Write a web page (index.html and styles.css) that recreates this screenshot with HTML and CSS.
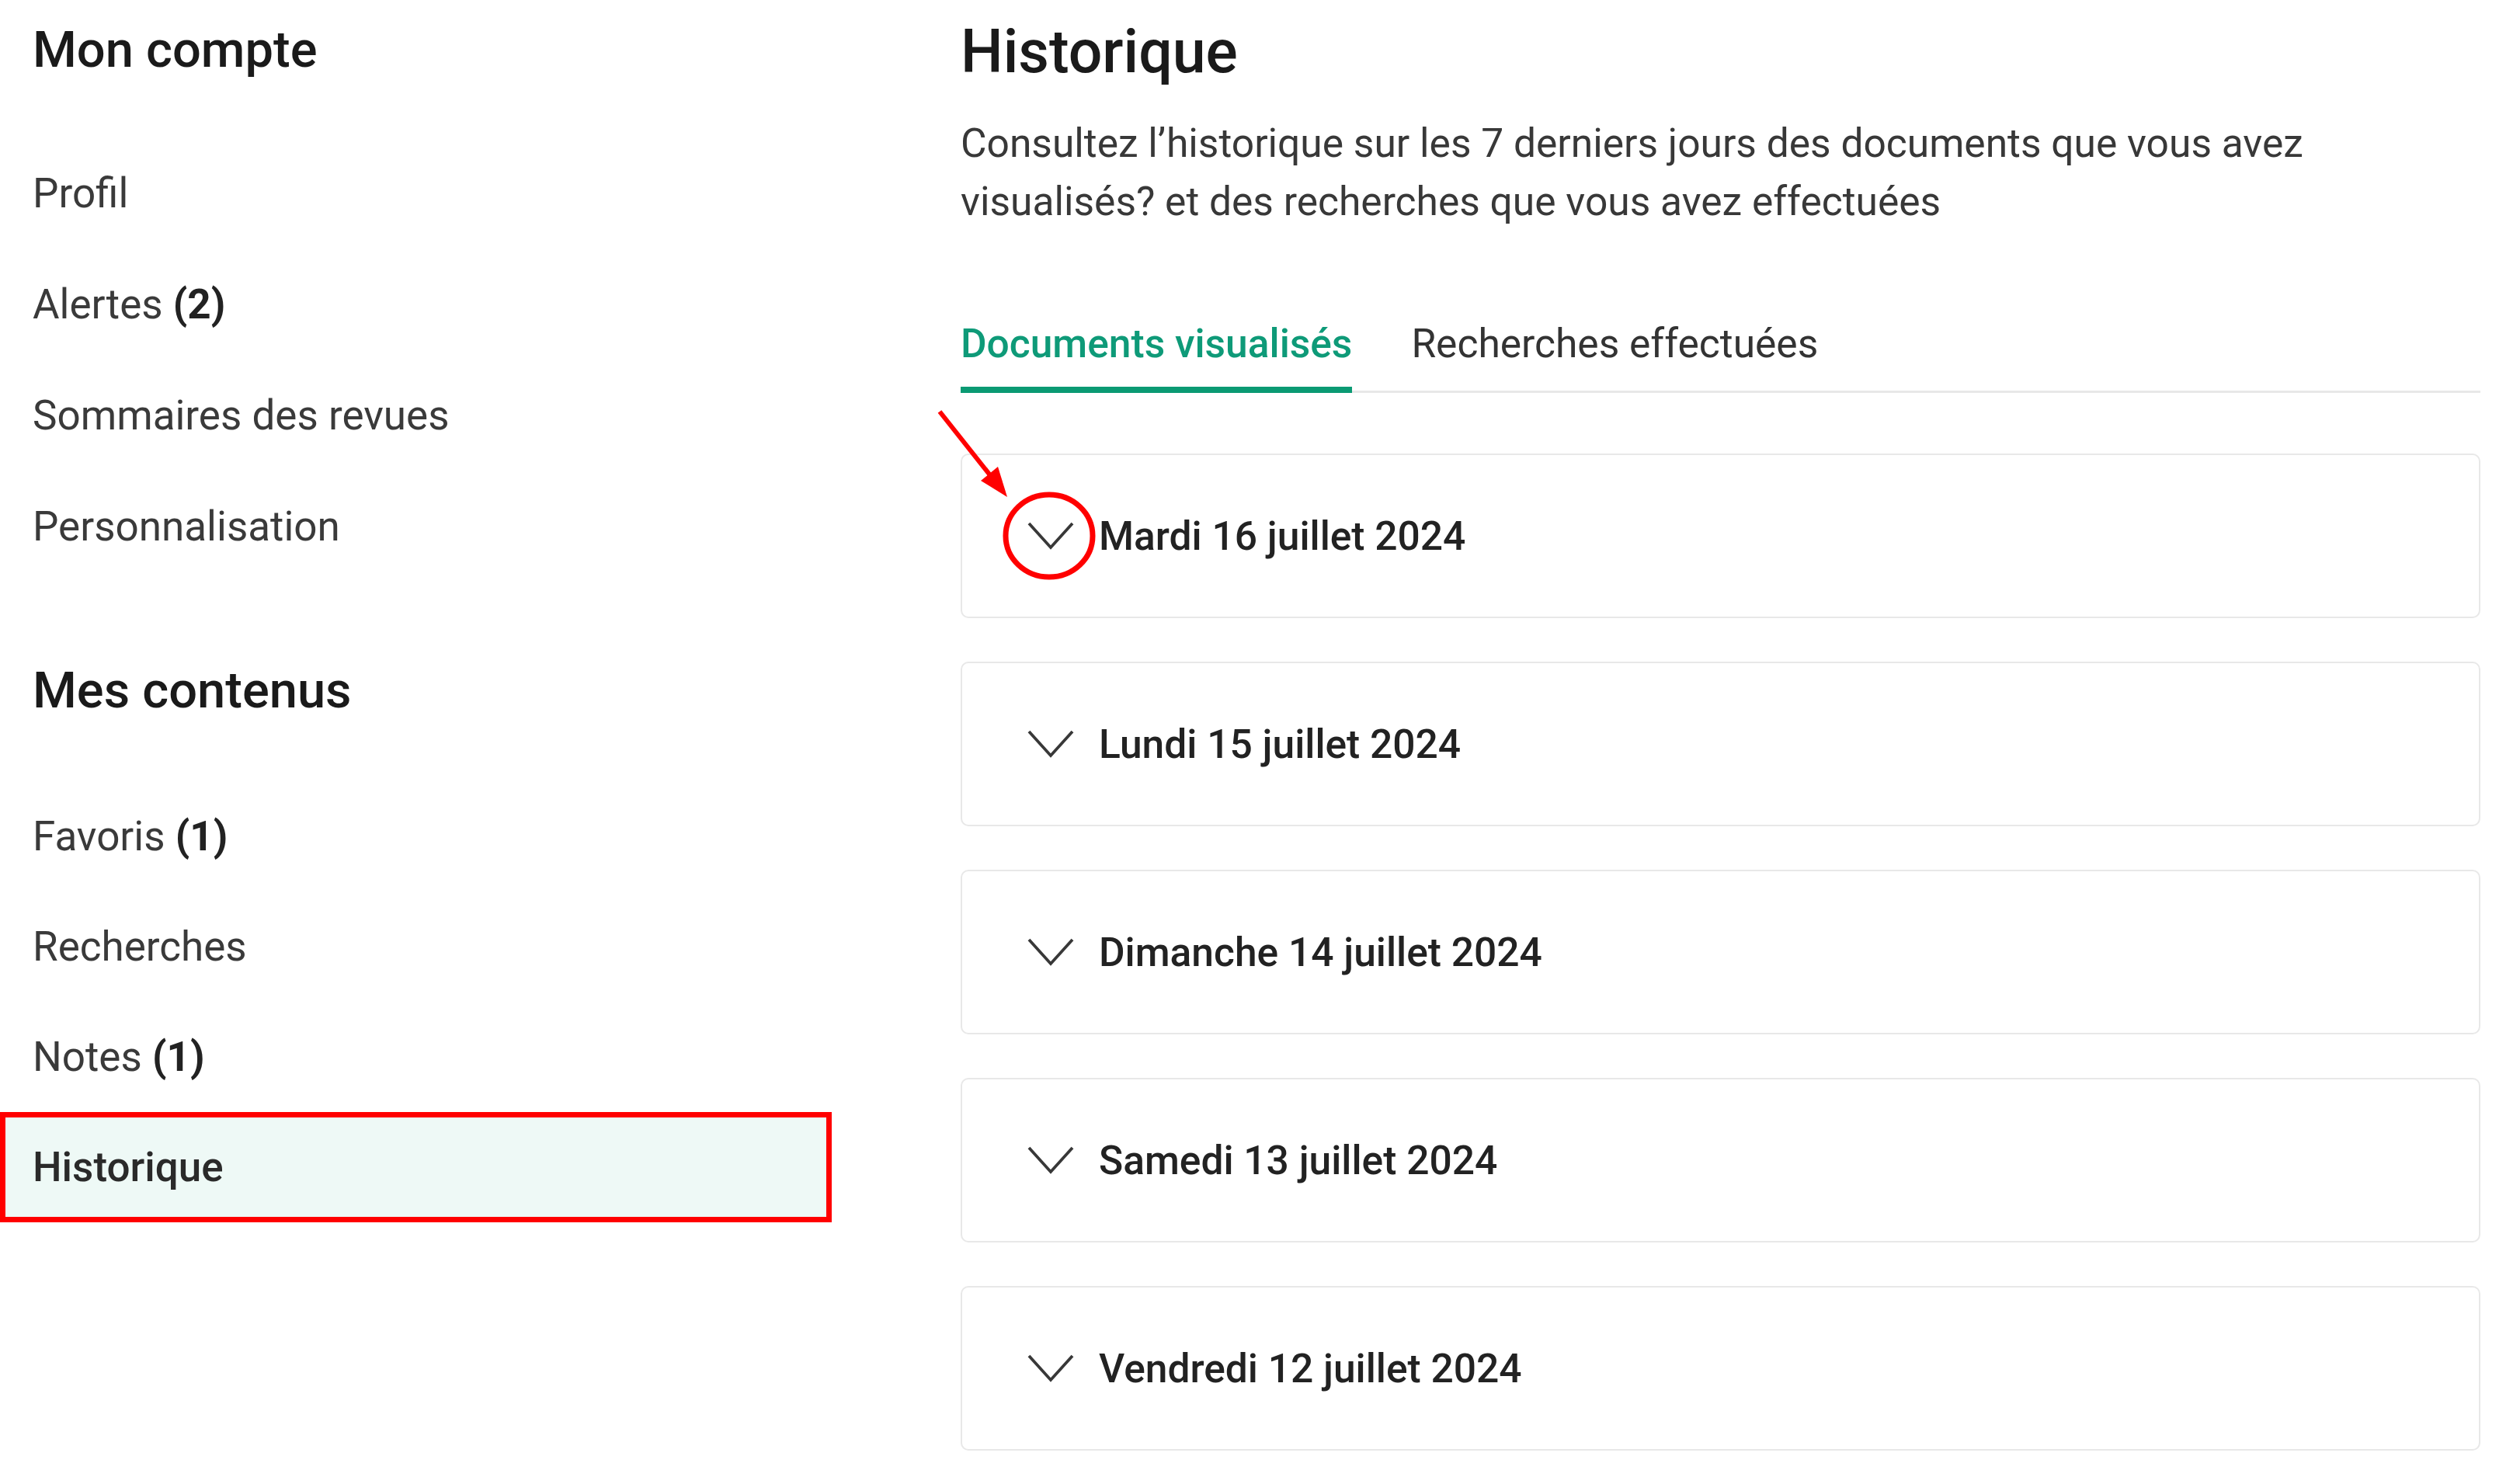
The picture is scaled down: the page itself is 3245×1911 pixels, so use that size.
FILE: index.html
```html
<!DOCTYPE html>
<html lang="fr">
<head>
<meta charset="utf-8">
<title>Historique</title>
<link rel="stylesheet" href="styles.css">
</head>
<body>
<div class="page">
  <aside class="sidebar">
    <h2 class="side-title first">Mon compte</h2>
    <nav class="side-nav">
      <a class="side-item">Profil</a>
      <a class="side-item">Alertes <b>(2)</b></a>
      <a class="side-item">Sommaires des revues</a>
      <a class="side-item">Personnalisation</a>
    </nav>
    <h2 class="side-title second">Mes contenus</h2>
    <nav class="side-nav compact">
      <a class="side-item">Favoris <b>(1)</b></a>
      <a class="side-item">Recherches</a>
      <a class="side-item">Notes <b>(1)</b></a>
      <a class="side-item active">Historique</a>
    </nav>
  </aside>
  <main class="content">
    <h1 class="title">Historique</h1>
    <p class="desc">Consultez l’historique sur les 7 derniers jours des documents que vous avez visualisés? et des recherches que vous avez effectuées</p>
    <div class="tabs">
      <div class="tab active">Documents visualisés</div>
      <div class="tab">Recherches effectuées</div>
    </div>
    <div class="days">
      <div class="day">
        <svg class="chev" viewBox="0 0 60 36"><path d="M2 2 L30 33 L58 2"/></svg>
        <span class="day-label">Mardi 16 juillet 2024</span>
      </div>
      <div class="day">
        <svg class="chev" viewBox="0 0 60 36"><path d="M2 2 L30 33 L58 2"/></svg>
        <span class="day-label">Lundi 15 juillet 2024</span>
      </div>
      <div class="day">
        <svg class="chev" viewBox="0 0 60 36"><path d="M2 2 L30 33 L58 2"/></svg>
        <span class="day-label">Dimanche 14 juillet 2024</span>
      </div>
      <div class="day">
        <svg class="chev" viewBox="0 0 60 36"><path d="M2 2 L30 33 L58 2"/></svg>
        <span class="day-label">Samedi 13 juillet 2024</span>
      </div>
      <div class="day">
        <svg class="chev" viewBox="0 0 60 36"><path d="M2 2 L30 33 L58 2"/></svg>
        <span class="day-label">Vendredi 12 juillet 2024</span>
      </div>
    </div>
  </main>
  <svg class="annot" viewBox="0 0 3245 1911" width="3245" height="1911">
    <ellipse cx="1351" cy="690" rx="56" ry="53" fill="none" stroke="#ff0000" stroke-width="7"/>
    <line x1="1210" y1="530" x2="1275" y2="612" stroke="#ff0000" stroke-width="6"/>
    <polygon points="1297,640 1263,619 1285,601" fill="#ff0000"/>
  </svg>
</div>
</body>
</html>
```

FILE: styles.css
```css
* { box-sizing: border-box; }
html, body {
  margin: 0;
  padding: 0;
  background: #ffffff;
}
body {
  font-family: Roboto, "Liberation Sans", Arial, sans-serif;
  color: #333333;
}
.page {
  position: relative;
  display: flex;
  width: 3245px;
  min-height: 1911px;
}
.sidebar {
  width: 1071px;
  flex: none;
}
.side-title {
  margin: 0;
  padding-left: 42px;
  font-size: 65px;
  font-weight: 500;
  line-height: 78px;
  color: #1a1a1a;
}
.side-title.first { margin-top: 25px; margin-bottom: 75px; }
.side-title.second { margin-top: 100px; margin-bottom: 78px; }
.side-nav {
  display: flex;
  flex-direction: column;
}
.side-item {
  display: block;
  height: 143px;
  line-height: 143px;
  padding-left: 42px;
  font-size: 53px;
  color: #3a3a3a;
  text-decoration: none;
}
.side-nav.compact .side-item {
  height: 142px;
  line-height: 142px;
}
.side-item b {
  font-weight: 700;
  color: #222222;
}
.side-nav .side-item.active {
  background: #eef9f6;
  border: 7px solid #ff0000;
  line-height: 128px;
  padding-left: 35px;
  color: #2a2a2a;
  font-weight: 500;
}
.content {
  margin-left: 166px;
  width: 1957px;
  flex: none;
}
.title {
  margin: 20px 0 0 0;
  font-size: 77px;
  font-weight: 500;
  line-height: 94px;
  color: #1a1a1a;
}
.desc {
  margin: 33px 0 0 0;
  font-size: 51.5px;
  line-height: 75px;
  color: #383838;
}
.tabs {
  display: flex;
  gap: 76px;
  margin-top: 115px;
  border-bottom: 3px solid #e8e8e8;
}
.tab {
  font-size: 51.5px;
  line-height: 61px;
  padding-bottom: 25px;
  color: #333333;
  margin-bottom: -3px;
  border-bottom: 8px solid transparent;
}
.tab.active {
  color: #0e9a78;
  font-weight: 500;
  border-bottom-color: #0a9a73;
}
.days {
  display: flex;
  flex-direction: column;
  gap: 56px;
  margin-top: 78px;
}
.day {
  height: 212px;
  border: 2px solid #e8e8e8;
  border-radius: 10px;
  display: flex;
  align-items: center;
  padding-left: 84px;
  gap: 32px;
}
.chev {
  width: 60px;
  height: 36px;
  flex: none;
}
.chev path {
  fill: none;
  stroke: #383838;
  stroke-width: 3.8;
}
.day-label {
  font-size: 51.5px;
  font-weight: 500;
  color: #222222;
}
.annot {
  position: absolute;
  left: 0;
  top: 0;
  pointer-events: none;
}
```
